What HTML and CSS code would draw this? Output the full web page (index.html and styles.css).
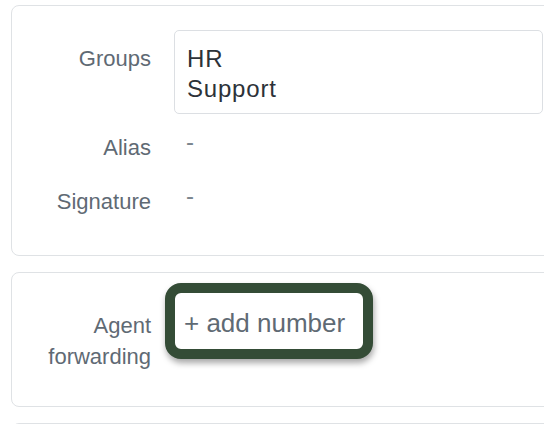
FILE: index.html
```html
<!DOCTYPE html>
<html lang="en">
<head>
    <meta charset="UTF-8">
    <meta name="viewport" content="width=device-width, initial-scale=1.0">
    <title>Agent</title>
    <link rel="stylesheet" href="styles.css">
</head>
<body>
  <div class="page">
    <div class="card card-info">
      <div class="row row-groups">
        <div class="label">Groups</div>
        <div class="groups-box">
          <div>HR</div>
          <div>Support</div>
        </div>
      </div>
      <div class="row row-alias">
        <div class="label">Alias</div>
        <div class="empty">-</div>
      </div>
      <div class="row">
        <div class="label">Signature</div>
        <div class="empty">-</div>
      </div>
    </div>

    <div class="card card-forward">
      <div class="row row-forward">
        <div class="label label-forward">Agent<br>forwarding</div>
        <button class="add-number">+ add number</button>
      </div>
    </div>

    <div class="card card-next"></div>
  </div>
</body>
</html>
```

FILE: styles.css
```css
html, body {
  height: 100%;
  overflow: hidden;
}
body {
  margin: 0;
  background: #fff;
  font-family: "Liberation Sans", Arial, sans-serif;
  font-size: 22px;
  line-height: 30px;
}
.page {
  padding-top: 5px;
  height: 424px;
  overflow: hidden;
  box-sizing: border-box;
}

.card {
  margin-left: 11px;
  margin-right: -30px;
  margin-bottom: 16px;
  border: 1px solid #dfe2e5;
  border-radius: 8px;
  background: #fff;
  box-sizing: border-box;
}
.card-info {
  padding: 24px 0 0;
  height: 251px;
}
.card-forward {
  height: 135px;
  padding-top: 10px;
}
.card-next {
  height: 40px;
}

.row {
  display: flex;
  align-items: flex-start;
}
.row-groups {
  margin-bottom: 19px;
}
.row-alias {
  margin-bottom: 24px;
}

.label {
  width: 139px;
  flex-shrink: 0;
  text-align: right;
  color: #5f6a74;
  margin-right: 23px;
}
.row-groups .label {
  padding-top: 14px;
}

.groups-box {
  width: 369px;
  box-sizing: border-box;
  border: 1px solid #dcdfe3;
  border-radius: 5px;
  padding: 13px 12px 9px;
  color: #2c3238;
  font-size: 24px;
  letter-spacing: 0.8px;
  flex-shrink: 0;
}

.empty {
  color: #7b858e;
  font-size: 24px;
  padding-left: 12px;
  position: relative;
  top: -6px;
}

.label-forward {
  padding-top: 27px;
  line-height: 31px;
}

.add-number {
  margin-left: -9px;
  border: 10px solid #344c36;
  border-radius: 16px;
  background: #fff;
  padding: 12px 18px 8px 9px;
  font-family: "Liberation Sans", Arial, sans-serif;
  font-size: 26px;
  line-height: 36px;
  color: #5f6a74;
  box-shadow: 1px 4px 6px rgba(0, 0, 0, 0.35);
  cursor: pointer;
}
```
